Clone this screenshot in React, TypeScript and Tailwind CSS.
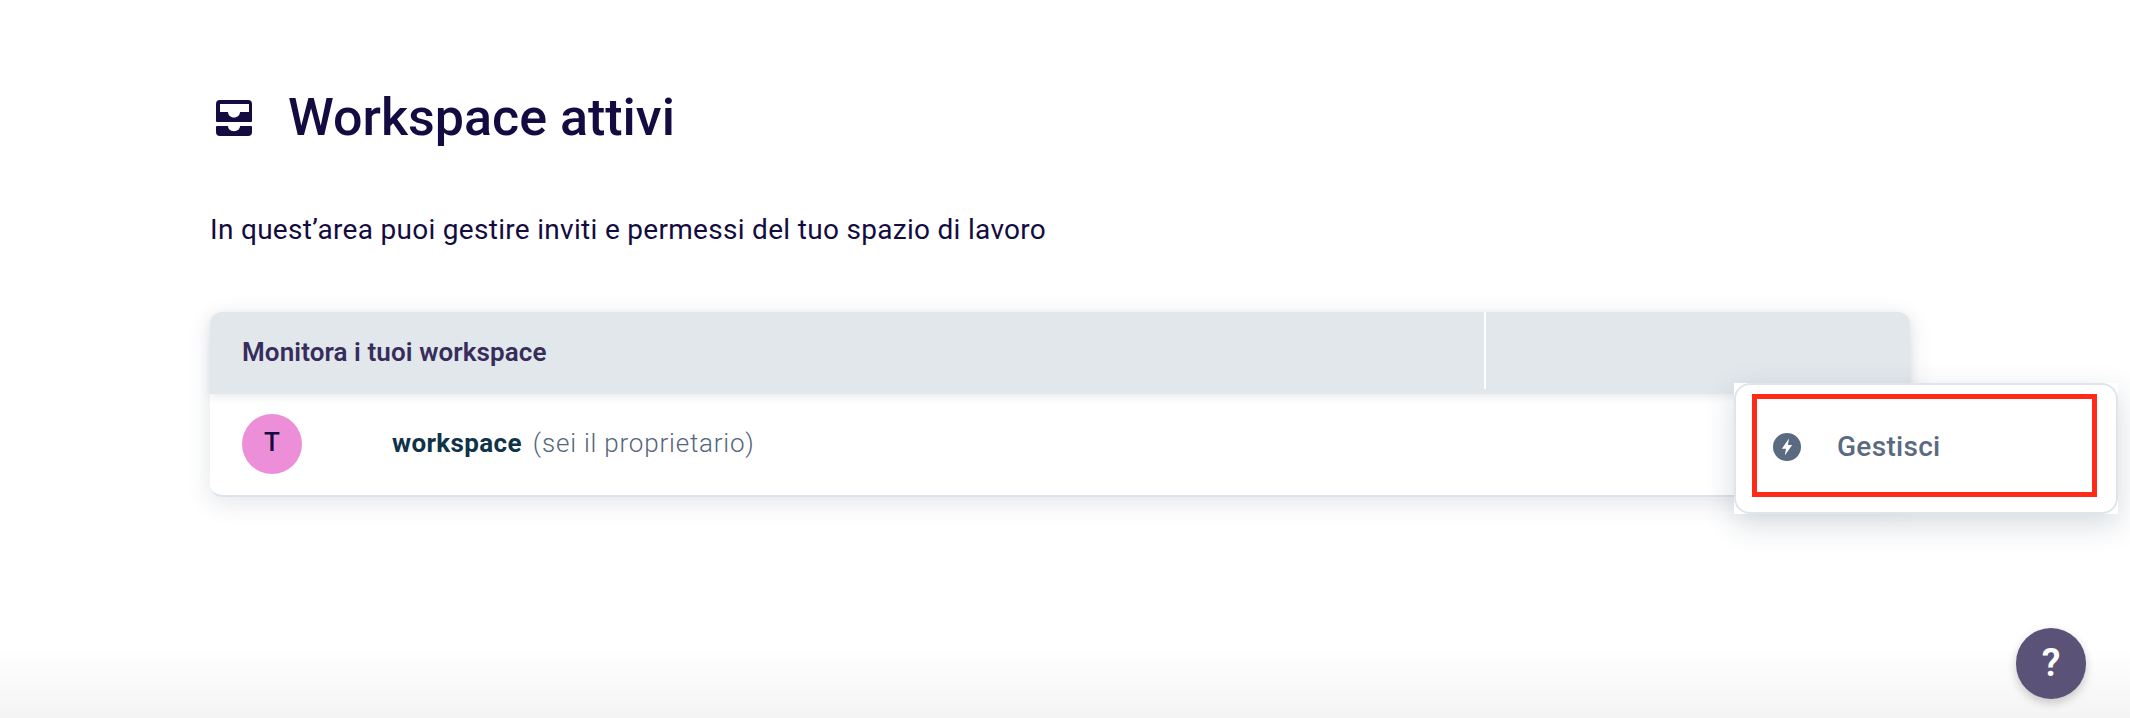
const font = "font-['Roboto',sans-serif]";

function TrayIcon() {
  return (
    <svg width="36" height="36" viewBox="0 0 36 36" className="shrink-0 text-[#140c40]">
      <path
        fill="currentColor"
        fillRule="evenodd"
        d="M4 0h28a4 4 0 0 1 4 4v17a1 1 0 0 1-1 1H1a1 1 0 0 1-1-1V4a4 4 0 0 1 4-4ZM4 4v8h8c0 3 2.500 5.500 6 5.500s6-2.500 6-5.500h9V4H4Z"
      />
      <path
        fill="currentColor"
        d="M1 26h11c0 3 2.500 5.200 6 5.200s6-2.200 6-5.200h11a1 1 0 0 1 1 1v5a4 4 0 0 1-4 4H4a4 4 0 0 1-4-4v-5a1 1 0 0 1 1-1Z"
      />
    </svg>
  );
}

function BoltIcon() {
  return (
    <svg width="28" height="28" viewBox="0 0 28 28" className="shrink-0">
      <circle cx="14" cy="14" r="14" fill="#5a6a80" />
      <path fill="#fff" d="M16 5.500 8.800 15.800h4.200L11.800 22.500l7.400-10.600h-4.300L16 5.500Z" />
    </svg>
  );
}

export default function App() {
  return (
    <div className={`${font} relative h-[718px] w-full overflow-hidden bg-white`}>
      <div className="absolute inset-x-0 bottom-0 h-[70px] bg-gradient-to-b from-white to-[#f4f4f4]" />

      <main className="relative pl-[210px] pr-[220px] pt-[87px]">
        <div className="flex items-center gap-[36px] pl-[6px]">
          <TrayIcon />
          <h1 className="text-[52px] font-medium leading-[61px] text-[#140c40]">Workspace attivi</h1>
        </div>

        <p className="mt-[64px] text-[28px] leading-[36px] tracking-[0.3px] text-[#140c40]">
          In quest’area puoi gestire inviti e permessi del tuo spazio di lavoro
        </p>

        <section className="relative mt-[64px] rounded-xl bg-white shadow-[0_6px_24px_rgba(30,50,80,0.12)]">
          <div className="flex h-[82px] rounded-t-xl bg-[#e2e7ec] shadow-[0_3px_8px_rgba(30,50,80,0.10)]">
            <div className="flex h-[77px] w-[1276px] items-center border-r-2 border-white pl-[32px] pt-[4px]">
              <span className="text-[26px] font-semibold tracking-[0.1px] text-[#372d5c]">Monitora i tuoi workspace</span>
            </div>
          </div>
          <div className="flex h-[103px] items-center rounded-b-xl border-b-2 border-[#dbe3ec] pb-[2px] pl-[32px]">
            <div className="flex h-[60px] w-[60px] items-center justify-center rounded-full bg-[#ec8fd8] pb-[2px] text-[26px] font-medium text-[#140c40]">
              T
            </div>
            <span className="ml-[90px] text-[26px] font-bold tracking-[0.35px] text-[#0f3349]">workspace</span>
            <span className="ml-[11px] text-[26px] font-light tracking-[0.8px] text-[#55667c]">(sei il proprietario)</span>
          </div>

          <div className="absolute left-[1524px] top-[71px] h-[131px] w-[384px] bg-white shadow-[0_10px_28px_rgba(30,50,80,0.18)]">
            <div className="h-full rounded-2xl border-2 border-[#dfe6ea] p-[9px] pl-[16px]">
              <div className="flex h-[103px] w-[345px] items-center border-[5px] border-[#ff2a17] pl-[16px] pt-[2px]">
                <BoltIcon />
                <span className="ml-[36px] text-[28px] font-medium tracking-[0.3px] text-[#5a6a80]">Gestisci</span>
              </div>
            </div>
          </div>
        </section>
      </main>

      <button className="absolute left-[2016px] top-[628px] flex h-[71px] w-[70px] items-center justify-center rounded-full bg-[#5b5277] text-[38px] font-semibold text-white shadow-[0_4px_10px_rgba(0,0,0,0.2)]">
        ?
      </button>
    </div>
  );
}
